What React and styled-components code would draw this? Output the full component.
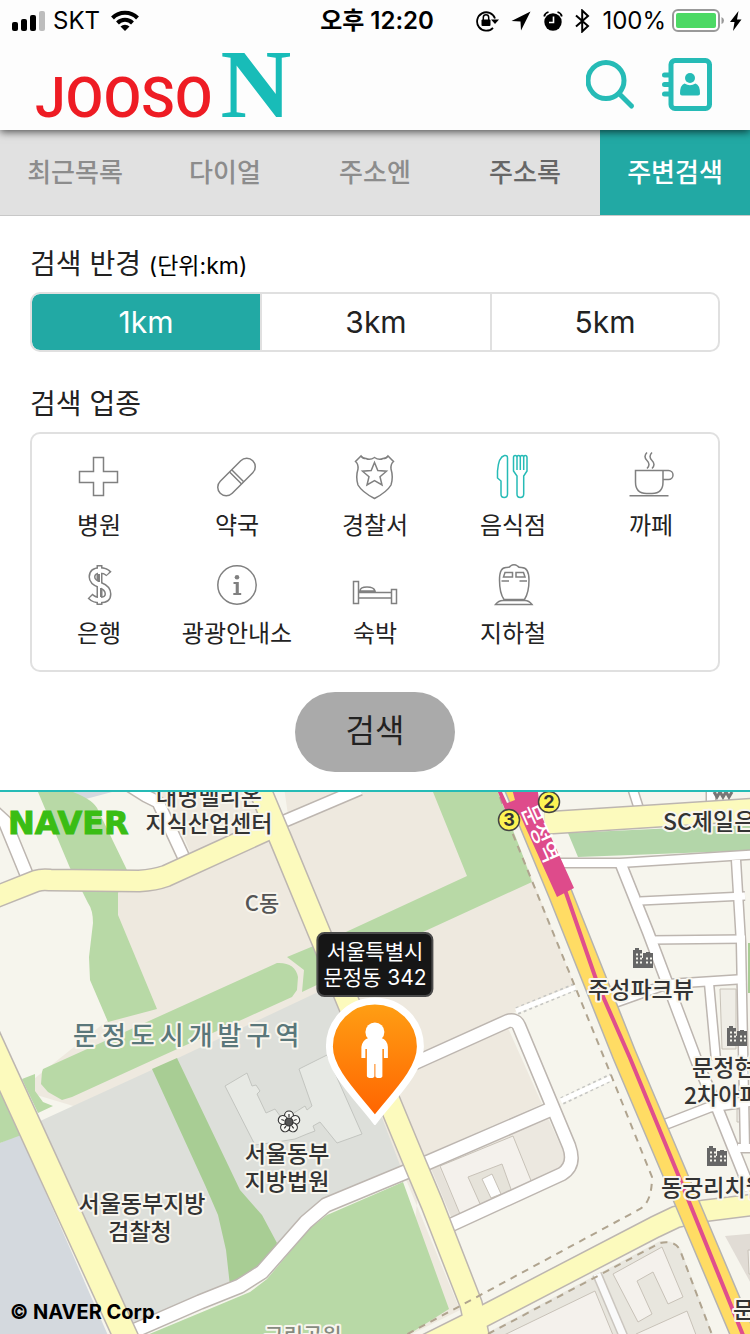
import React, { useState } from "react";
import styled, { createGlobalStyle, css } from "styled-components";

const teal = "#22a9a4";
const tealBright = "#26bbb6";
const line = "#e0e0e0";
const ui = `Inter, "Noto Sans CJK KR", sans-serif`;

const GlobalStyle = createGlobalStyle`
  *, *::before, *::after { box-sizing: border-box; }
  body { margin: 0; background: #fff; color: #222; font-family: ${ui}; }
  button { font: inherit; border: 0; padding: 0; background: none; cursor: pointer; }
  h2, fieldset, ul { margin: 0; padding: 0; border: 0; min-width: 0; }
`;

const Screen = styled.div`
  display: flex;
  flex-direction: column;
  min-height: 100vh;
`;

/* ---------- top ---------- */

const Top = styled.header`
  position: relative;
  z-index: 2;
  background: #fdfdfd;
  box-shadow: 0 2px 8px rgba(0, 0, 0, 0.65);
`;

const StatusBar = styled.div`
  display: grid;
  grid-template-columns: 1fr auto 1fr;
  align-items: center;
  height: 40px;
  padding: 2px 8px 0 12px;
  color: #000;
  font-size: 24px;
  line-height: 32px;
`;

const StatusGroup = styled.div`
  display: flex;
  align-items: center;
  justify-content: ${(p) => (p.$end ? "flex-end" : "flex-start")};
  gap: ${(p) => p.$gap}px;
`;

const Clock = styled.time`
  font-weight: 600;
`;

const Brand = styled.div`
  display: flex;
  align-items: center;
  justify-content: space-between;
  height: 90px;
  padding: 0 38px 0 35px;
`;

const Logo = styled.a`
  display: flex;
  align-items: baseline;
  gap: 8px;
  padding-top: 12px;
  text-decoration: none;
`;

const LogoWord = styled.span`
  color: #ee1c24;
  font: 500 55px/90px Roboto, sans-serif;
`;

const LogoLetter = styled.span`
  color: #18bcb8;
  font: 700 98px/90px "Liberation Serif", serif;
`;

const Actions = styled.div`
  display: flex;
  align-items: center;
  gap: 26px;
`;

const IconButton = styled.button`
  display: flex;
  color: ${tealBright};
`;

/* ---------- tabs ---------- */

const Tabs = styled.nav`
  display: grid;
  grid-template-columns: repeat(5, 1fr);
  height: 86px;
  background: #e1e1e1;
  border-bottom: 1px solid #c8c8c8;
`;

const Tab = styled.a`
  display: flex;
  align-items: center;
  justify-content: center;
  color: ${(p) => (p.$dark ? "#666" : "#8c8c8c")};
  font-size: 26px;
  font-weight: 500;
  line-height: 40px;
  text-decoration: none;
  white-space: nowrap;
  &[aria-current] { background: ${teal}; color: #fff; }
`;

/* ---------- search form ---------- */

const SearchForm = styled.form`
  display: flex;
  flex-direction: column;
  padding: 28px 30px 18px;
  border-bottom: 2px solid ${tealBright};
`;

const Heading = styled.h2`
  color: #222;
  font-size: 28px;
  font-weight: 400;
  line-height: 40px;
  margin: ${(p) => (p.$spaced ? 32 : 0)}px 0 8px;
`;

const Unit = styled.small`
  color: #000;
  font-size: 23px;
  line-height: 32px;
`;

const Segments = styled.fieldset`
  display: grid;
  grid-template-columns: repeat(3, 1fr);
`;

const Segment = styled.label`
  position: relative;
  display: flex;
  align-items: center;
  justify-content: center;
  height: 60px;
  border: 2px solid ${line};
  border-right-width: 0;
  font-size: 30px;
  line-height: 40px;
  cursor: pointer;
  &:first-of-type { border-radius: 10px 0 0 10px; }
  &:last-of-type { border-right-width: 2px; border-radius: 0 10px 10px 0; }
  ${(p) => p.$on && css`background: ${teal} padding-box; color: #fff;`}
`;

const SegmentInput = styled.input`
  position: absolute;
  inset: 0;
  width: 100%;
  height: 100%;
  margin: 0;
  opacity: 0;
`;

const Categories = styled.div`
  display: grid;
  grid-template-columns: repeat(5, 1fr);
  row-gap: 16px;
  padding: 20px 0;
  border-radius: 10px;
  box-shadow: inset 0 0 0 2px ${line};
`;

const Category = styled.button`
  display: flex;
  flex-direction: column;
  align-items: center;
  gap: 8px;
  color: #222;
  font-size: 24px;
  line-height: 36px;
  white-space: nowrap;
  svg { color: ${(p) => (p.$on ? tealBright : "#808080")}; }
`;

const Submit = styled.button`
  && {
    align-self: center;
    width: 160px;
    height: 80px;
    margin-top: 20px;
    padding-bottom: 2px;
    border-radius: 40px;
    background: #aaa;
    color: #222;
    font-size: 32px;
    line-height: 78px;
  }
`;

/* ---------- map ---------- */

const MapArea = styled.main`
  position: relative;
  flex: 1;
  min-height: 542px;
  overflow: hidden;
  background: #f6f5ed;
`;

const MapCanvas = styled.svg`
  position: absolute;
  inset: 0;
  display: block;
  width: 100%;
  height: 100%;
`;

const MapLogo = styled.a`
  position: absolute;
  left: 8px;
  top: 14px;
  color: #3abd14;
  font: 700 32px/34px "DejaVu Sans", sans-serif;
  -webkit-text-stroke: 1px #3abd14;
  text-decoration: none;
`;

const Copyright = styled.div`
  position: absolute;
  left: 10px;
  bottom: 8px;
  color: #000;
  font-size: 20px;
  font-weight: 700;
  line-height: 28px;
`;

const Marker = styled.div`
  position: absolute;
  left: 50%;
  top: 140px;
  display: flex;
  flex-direction: column;
  align-items: center;
  transform: translateX(-50%);
`;

const Callout = styled.div`
  padding: 5px;
  border: 2px solid #4b4b4b;
  border-radius: 8px;
  background: #161616;
  color: #fff;
  font-size: 21px;
  line-height: 26px;
  text-align: center;
  white-space: nowrap;
  height: 65px;
`;

/* ---------- status and header icons ---------- */

const Signal = () => (
  <svg width="33" height="20" aria-hidden="true">
    <rect x="0" y="11" width="6" height="9" rx="2" />
    <rect x="9" y="8" width="6" height="12" rx="2" />
    <rect x="18" y="4" width="6" height="16" rx="2" />
    <rect x="27" y="0" width="6" height="20" rx="2" fill="#bdbdbd" />
  </svg>
);

const Wifi = () => (
  <svg width="32" height="22" viewBox="-3 0 32 22" fill="none" stroke="#000" strokeWidth="4" aria-hidden="true">
    <path d="M1.500 8a17.500 17.500 0 0 1 25 0" />
    <path d="M6.500 13a10.500 10.500 0 0 1 15 0" />
    <path d="M14 21l-4.500-4.500a6.500 6.500 0 0 1 9 0z" fill="#000" stroke="none" />
  </svg>
);

const RotationLock = () => (
  <svg width="23" height="22" viewBox="0 0 23 22" aria-hidden="true">
    <path d="M17 17.800A9.200 9.200 0 1 1 19 8.500" fill="none" stroke="#000" strokeWidth="1.800" />
    <path d="M15 9.500h8l-4 4.500z" />
    <rect x="5.500" y="9.500" width="9" height="6.500" rx="1" />
    <path d="M7.300 10V7.500a2.700 2.700 0 0 1 5.400 0V10" fill="none" stroke="#000" strokeWidth="1.500" />
  </svg>
);

const Location = () => (
  <svg width="20" height="20" viewBox="0 0 20 20" aria-hidden="true">
    <path d="M19.500 0.500L10 19.500L9.500 10.500L0.500 10z" />
  </svg>
);

const Alarm = () => (
  <svg width="20" height="20" viewBox="0 0 20 20" aria-hidden="true">
    <circle cx="10" cy="11" r="8.700" />
    <path d="M10.500 5.500v6H6" fill="none" stroke="#fff" strokeWidth="1.600" />
    <path d="M1.200 5.500Q1.800 2 5.500 1M18.800 5.500Q18.200 2 14.500 1" fill="none" stroke="#000" strokeWidth="1.800" />
  </svg>
);

const Bluetooth = () => (
  <svg width="15" height="24" viewBox="0 0 15 24" fill="none" stroke="#000" strokeWidth="2" aria-hidden="true">
    <path d="M1 6.500l12 10.500-5.800 5.500V1.500L13 7 1 17.500" />
  </svg>
);

const Battery = () => (
  <svg width="52" height="24" viewBox="0 0 52 24" aria-hidden="true">
    <rect x="1" y="1" width="46" height="21" rx="5" fill="#fff" stroke="#999" strokeWidth="2" />
    <rect x="4" y="4" width="40" height="15" rx="2" fill="#4cd964" />
    <path d="M49.500 8q2.500 1 2.500 3.500t-2.500 3.500z" fill="#999" />
  </svg>
);

const Bolt = () => (
  <svg width="12" height="20" viewBox="0 0 12 20" aria-hidden="true">
    <path d="M8.500 0L0 11h4.500L3 20l8.500-11.500H7z" />
  </svg>
);

const SearchGlyph = () => (
  <svg width="50" height="54" viewBox="0 0 50 54" fill="none" stroke="currentColor" strokeWidth="5" aria-hidden="true">
    <circle cx="20" cy="22.500" r="18" />
    <path d="M33.500 36l12 12" strokeLinecap="round" />
  </svg>
);

const BookGlyph = () => (
  <svg width="50" height="54" viewBox="0 0 50 54" fill="none" stroke="currentColor" strokeWidth="5" aria-hidden="true">
    <rect x="9" y="2.500" width="38.500" height="48" rx="4" />
    <path d="M2.500 17h5M2.500 26.500h5M2.500 36h5" strokeLinecap="round" />
    <circle cx="28" cy="20" r="5" fill="currentColor" stroke="none" />
    <path d="M22.500 25.500q5.500 3.500 11 0q4.500 1.500 4.500 10q0 2-2 2H20q-2 0-2-2q0-8.500 4.500-10z" fill="currentColor" stroke="none" />
  </svg>
);

/* ---------- category icons, drawn on a 48 unit square ---------- */

const glyphs = {
  cross: <path d="M18.500 5.500h10v14h14v11h-14v13h-10v-13h-14v-11h14z" />,
  pill: (
    <g transform="translate(23.500 25) rotate(-45)">
      <rect x="-23" y="-8.500" width="46" height="17" rx="8.500" />
      <path d="M-1.300-8.500v17M1.700-8.500v17" />
    </g>
  ),
  shield: (
    <>
      <path d="M23.500 5.500Q28 8.500 32 6.500Q35.500 6.500 37 4L42.500 9.500Q39.500 12 40 17Q42.500 25 40 33Q36 40 23.500 46.500Q11 40 7 33Q4.500 25 7 17Q7.500 12 4.500 9.500L10 4Q11.500 6.500 15 6.500Q19 8.500 23.500 5.500z" />
      <path d="M23.500 10.500L26.800 18.500L35.500 19.200L29 24.800L31 33L23.500 28.700L16 33L18 24.800L11.500 19.200L20.200 18.500z" />
    </>
  ),
  cutlery: (
    <>
      <path d="M15.500 3.500Q18.500 3 18.500 6V42Q18.500 45.500 15.200 45.500T12 42V29L8.500 26V19Q9.500 5 15.500 3.500z" />
      <path d="M24.500 5.500Q24.500 3.500 26.200 3.500T28 5.500Q28 3.500 29.600 3.500T31.300 5.500Q31.300 3.500 33 3.500T34.700 5.500Q34.700 3.500 36.300 3.500T38 5.500V19L34.700 24V42Q34.700 45.500 31.300 45.500T28 42V24L24.500 19zM28 5v13M31.300 5v13M34.700 5v13" />
    </>
  ),
  cup: (
    <>
      <path d="M8.500 18.500H36V30Q36 41.500 25 41.500H19.500Q8.500 41.500 8.500 30zM36 18.500h5.500a4.300 4.300 0 0 1 0 9H36M2.500 43.800h39" />
      <path d="M20 0.500q-4 4 0 8t0 8M25 0.500q-4 4 0 8t0 8" />
    </>
  ),
  dollar: (
    <>
      <path d="M24.500 5v40" strokeWidth="6" />
      <path d="M34 14Q31 10.500 25 10.500Q17 10.500 17 17Q17 22 25 25Q33 28 33 34Q33 40 25 40Q19 40 15 36" strokeWidth="7" />
      <path d="M24.500 6.500v37" stroke="#fff" strokeWidth="3" />
      <path d="M33 13.200Q30 10.500 25 10.500Q17 10.500 17 17Q17 22 25 25Q33 28 33 34Q33 40 25 40Q19 40 16 36.800" stroke="#fff" strokeWidth="4" />
      <path d="M24 14v8M26 28v9" strokeWidth="2" />
    </>
  ),
  info: (
    <>
      <circle cx="24" cy="25" r="19.200" />
      <circle cx="24" cy="17.300" r="2.300" fill="currentColor" stroke="none" />
      <path d="M20.500 22h5.300v11h2.400v2h-7.900v-2h2.400v-9h-2.200z" fill="currentColor" stroke="none" />
    </>
  ),
  bed: (
    <>
      <path d="M2.500 21.500h5v22h-5zM40.500 29.500h5v14h-5zM7.500 32.500h33M7.500 38h33M9 31q0-4 7-4t8 4z" />
    </>
  ),
  train: (
    <>
      <path d="M18 39.500h-3Q10.500 33 10.500 20T17.500 7.500q3 0 4-1.500q3.500-2.500 7 0q1 1.500 4 1.500Q40 7.500 40 20T35.500 39.500z" />
      <path d="M16 12.500h7.500v4.500h-9zM27 12.500h7.500l1.500 4.500h-9zM12.500 21h7.500M30.500 21H38M14 40.500h22q4 0 7 4H6.500q3-4 7.500-4z" />
    </>
  ),
};

const Glyph = ({ name }) => (
  <svg width="48" height="48" viewBox="0 0 48 48" fill="none" stroke="currentColor" strokeWidth="1.500" aria-hidden="true">
    {glyphs[name]}
  </svg>
);

const Pin = () => (
  <svg width="100" height="128" viewBox="325 997 100 128" aria-hidden="true">
    <defs>
      <linearGradient id="pinFill" x1="0" y1="0" x2="0" y2="1">
        <stop offset="0" stopColor="#ffa014" />
        <stop offset="1" stopColor="#ff6200" />
      </linearGradient>
    </defs>
    <path
      d="M374.500 1001a45.500 45.500 0 0 1 45.500 45.500C420 1071 393 1096 374.500 1120C356 1096 329 1071 329 1046.500A45.500 45.500 0 0 1 374.500 1001z"
      fill="url(#pinFill)" stroke="#fff" strokeWidth="7"
    />
    <g fill="#fff">
      <circle cx="374.500" cy="1032" r="9.500" />
      <path d="M368 1038h13q6 2 6.500 9v11h-4v-9l-1.500 0v27q0 2-3.500 2t-3.500-2v-12h-1v12q0 2-3.500 2t-4-2v-27l-1.500 0v9h-4v-11q1-7 7-9z" />
    </g>
  </svg>
);

/* ---------- map drawing ---------- */

const Road = ({ d, w, color = "#fff", edge = "#bdb6b0" }) => (
  <>
    <path d={d} fill="none" stroke={edge} strokeWidth={w + 3} strokeLinejoin="round" />
    <path d={d} fill="none" stroke={color} strokeWidth={w} strokeLinejoin="round" />
  </>
);

const Network = ({ roads }) => (
  <g fill="none" strokeLinejoin="round">
    {roads.map(([d, w]) => (
      <path key={d} d={d} stroke="#bdb6b0" strokeWidth={w + 3} />
    ))}
    {roads.map(([d, w, color]) => (
      <path key={d} d={d} stroke={color || "#fff"} strokeWidth={w} />
    ))}
  </g>
);

const whiteRoads = [
  ["M-6 812L5 822L28 878", 12],
  ["M130 786L146 796L158 802L184 858", 11],
  ["M280 823L360 789", 11],
  ["M122 1336L200 1302L240 1286L262 1272L306 1222L326 1205L408 1171L549 1110", 13],
  ["M395 1072L508 1021Q516 1019 519 1026L569 1146Q576 1165 562 1174L440 1230", 12],
  ["M555 863H620L760 854", 8],
  ["M631 784L640 812", 8],
  ["M711 784V810", 8],
  ["M620 862L648 932L697 1062L716 1105L750 1190", 10],
  ["M640 901L745 896", 7],
  ["M650 940L745 939", 7],
  ["M606 1006L668 984L745 979", 8],
  ["M736 860L741 943L745 1150", 8],
  ["M709 983L716 1060", 8],
  ["M656 1128L710 1107L760 1100", 9],
  ["M738 1148H760", 8],
];

const yellowRoads = [
  ["M-33 990L135 1357", 23, "#fcfabd"],
  ["M-12 900L36 881Q42 879 50 880L139 881Q155 880 166 876L280 824", 20, "#fcfabd"],
  ["M255 778L281 840L319 932L411 1154L432 1204L471 1304L480 1345", 21, "#fcfabd"],
  ["M545 823L655 816L760 809", 21, "#fcfabd"],
  ["M760 1204L703 1211L676 1217L655 1227L480 1318L420 1348", 20, "#fcfabd"],
];

const labels = [
  { x: 209, y: 805, t: "대명밸리온" },
  { x: 209, y: 832, t: "지식산업센터" },
  { x: 262, y: 911, t: "C동", size: 22, color: "#555" },
  { x: 641, y: 998, t: "주성파크뷰" },
  { x: 287, y: 1162, t: "서울동부" },
  { x: 287, y: 1190, t: "지방법원" },
  { x: 142, y: 1212, t: "서울동부지방" },
  { x: 140, y: 1240, t: "검찰청" },
  { x: 663, y: 830, t: "SC제일은행", anchor: "start" },
  { x: 692, y: 1076, t: "문정현대", anchor: "start" },
  { x: 684, y: 1104, t: "2차아파트", anchor: "start" },
  { x: 661, y: 1196, t: "동궁리치웰", anchor: "start" },
  { x: 733, y: 1318, t: "문정", anchor: "start" },
  { x: 303, y: 1343, t: "근린공원", size: 21, color: "#868b80" },
];

const MapLabel = styled.text`
  font-family: "Noto Sans CJK KR", sans-serif;
  font-weight: 500;
  font-size: ${(p) => p.$size || 23}px;
  fill: ${(p) => p.$color || "#333"};
  stroke: #f8f6ee;
  stroke-width: 4px;
  stroke-linejoin: round;
  paint-order: stroke;
`;

const DistrictLabel = styled(MapLabel)`
  letter-spacing: 5px;
`;

const StationLabel = styled.text`
  font: 500 22px "Noto Sans CJK KR", sans-serif;
  fill: #fff;
`;

const ExitNumber = styled.text`
  font: 700 18px Inter, sans-serif;
  fill: #333;
`;

const Apartment = ({ x, y }) => (
  <g transform={`translate(${x} ${y})`}>
    <path d="M0 2h2V0h4v2h3v18H0zM10 5h3V4h4v1h3v15H10z" fill="#666" />
    <path d="M0 20V10h20v10z" fill="#666" />
    <path d="M3 6.500h6M3 10.500h6M3 14.500h6M13 10.500h6M13 14.500h6" stroke="#f6f5ed" strokeWidth="2" strokeDasharray="2 2" />
  </g>
);

const petals = [0, 72, 144, 216, 288];

const CityMap = () => (
  <MapCanvas viewBox="0 792 750 542" preserveAspectRatio="xMidYMin slice" role="img" aria-label="지도">
    <path d="M0 780h750v560H0z" fill="#f6f5ed" />

    {/* blocks */}
    <path d="M153 780H262L290 835L190 852L172 808L153 800z" fill="#eee9df" />
    <path d="M70 792H112L82 800z" fill="#d4d9df" />
    <path d="M118 885L165 888L269 841L345 1020L120 1120L20 1090L108 1020z" fill="#eee9df" />
    <path d="M283 780H497L575 985L515 1012L430 1060L398 1099L300 900z" fill="#eee9df" />
    <path d="M0 1143L20 1134L110 1340H0z" fill="#d4d9de" />
    <path d="M0 1093L8 1094L24 1134L0 1143z" fill="#b8d9a6" />
    <path d="M38 1122L178 1058L333 985L352 1030L405 1165L327 1210L262 1280L133 1330z" fill="#dddfda" />
    <path d="M360 1060L400 1165L460 1310L400 1340L420 1180z" fill="#eee9df" />

    {/* parks */}
    <path d="M38 780V792L70 868L83 893L88 903Q93 910 93 923L89 957L90 980L108 1022L157 1009L118 915V893L127 870L98 810Q94 800 73 792V780z" fill="#b8d9a6" />
    <path d="M43 1069L277 963Q295 962 298 977L297 990L292 997L153 1060L72 1097L62 1100L48 1092L41 1084L42 1072z" fill="#b8d9a6" />
    <path d="M22 1079L35 1074V1091L43 1102L53 1106L38 1113z" fill="#b8d9a6" />
    <path d="M287 957L328 940L338 975L302 992L304 970z" fill="#b8d9a6" />
    <path d="M433 780V792L467 876L320 944V965L423 932L532 882L497 780z" fill="#b8d9a6" />
    <path d="M568 833L760 824V850L578 857z" fill="#b3d6a9" />
    <path d="M152 1069L177 1058L240 1190L262 1215L277 1243L262 1272L230 1286L226 1250L218 1215L205 1185z" fill="#a8cd94" />
    <path d="M135 1340L207 1310L250 1292L267 1279L310 1228L327 1215L403 1182L449 1309L400 1340z" fill="#b8d9a6" />

    {/* courthouse */}
    <path
      d="M225 1086L247 1073L252 1086L256 1085L260 1091L257 1094L266 1113L275 1109L283 1120L297 1111L305 1106L307 1110L312 1106L299 1069L327 1055L362 1134L337 1143L320 1122L313 1126L315 1131L307 1134L295 1139L277 1142L255 1145z"
      fill="#e7e9e4" stroke="#c3c5c0"
    />

    {/* blocks east of the pin */}
    <path d="M420 1069L508 1028L542 1104L423 1156L398 1099z" fill="#eee9df" />
    <path d="M430 1167L548 1118L567 1160L557 1169L452 1219z" fill="#ece8e0" />
    <path d="M431 1168L438 1165L460 1215L452 1219z" fill="#e6e2da" />
    <path d="M440 1166L513 1136L532 1183L512 1192L481 1206L460 1214z" fill="#f4f1ec" stroke="#c8c2b8" />
    <path d="M468 1177L502 1164L512 1192L481 1206z" fill="#e6e3da" stroke="#c8c2b8" />
    <path d="M482 1179L492 1174L501 1194L491 1198z" fill="#fdfdfd" stroke="#c8c2b8" />

    {/* south-east buildings */}
    <path d="M485 1334L660 1241Q676 1240 681 1250L715 1340H485z" fill="#e8e6de" />
    <path d="M500 1337L595 1291L615 1340z" fill="#f4f1ec" stroke="#c8c2b8" />
    <path d="M613 1274L662 1247L683 1297L668 1304L653 1272L637 1281L652 1314L638 1322z" fill="#f4f1ec" stroke="#c8c2b8" />
    <path d="M636 1334L687 1311L698 1340H640z" fill="#f4f1ec" stroke="#c8c2b8" />
    <path d="M725 1236L760 1233V1300z" fill="#e1dcd5" />
    <path d="M748 1250h10v24h-9z" fill="#f4f1ec" stroke="#c8c2b8" />
    <Road d="M597 1274L625 1340" w={7} color="#fafafa" edge="#cbc6bf" />
    <path d="M720 989h16v60h-14zM737 1109h20v13h-20z" fill="#efede6" stroke="#c8c2b8" />
    <path d="M748 943h6v50h-6z" fill="#a8cd94" />

    <Network roads={whiteRoads} />
    <Network roads={yellowRoads} />

    {/* footpaths */}
    <path d="M517 1011L575 987M562 1101L612 1077" stroke="#c6c6c2" strokeWidth="8" strokeDasharray="3 3" />
    <path d="M516 1011L576 987M561 1101L613 1077" stroke="#fff" strokeWidth="5" />
    <path d="M495 785L510 785L620 1060H604z" fill="#f6f5ed" />
    <path
      d="M500 797L512 832L605 1060L652 1177Q652 1202 640 1209L460 1306L400 1338M488 1334L660 1243Q675 1240 680 1250L714 1340"
      fill="none" stroke="#b0a48f" strokeWidth="2" strokeDasharray="7 6"
    />

    {/* subway avenue */}
    <Road d="M509 770L560 893L624 1054L696 1224L750 1352" w={22} color="#ffdc64" edge="#b5b3b0" />
    <path d="M565 890L598 985L630 1058L677 1172L745 1340" fill="none" stroke="#e04e8d" strokeWidth="4" />
    <path d="M495 785L502 785V792L507 803L515 800L511 785H537L541 815L574 888L557 897L520 815L506 812z" fill="#de4b8b" />
    <StationLabel transform="translate(521 809) rotate(66)">문정역</StationLabel>

    <g fill="#fdf353" stroke="#444" strokeWidth="1.500">
      <circle cx="549" cy="802" r="10.500" />
      <circle cx="509" cy="820" r="10.500" />
    </g>
    <ExitNumber x="549" y="808" textAnchor="middle">2</ExitNumber>
    <ExitNumber x="509" y="826" textAnchor="middle">3</ExitNumber>

    <path d="M714 792l3 5 3-5 3 5 3-5 3 5 3-5" fill="none" stroke="#777" strokeWidth="3" />
    <Apartment x={633} y={948} />
    <Apartment x={727} y={1026} />
    <Apartment x={707} y={1146} />

    <g transform="translate(289 1122)" stroke="#333" strokeWidth="1.200">
      {petals.map((a) => (
        <g key={a} transform={`rotate(${a})`}>
          <circle cy="-6.500" r="4.500" fill="#f8f8f4" />
          <path d="M0-8v3" />
        </g>
      ))}
      <circle r="4" fill="#555" />
    </g>

    {labels.map((l) => (
      <MapLabel key={l.t} x={l.x} y={l.y} textAnchor={l.anchor || "middle"} $size={l.size} $color={l.color}>
        {l.t}
      </MapLabel>
    ))}
    <DistrictLabel x="73" y="1045" $size={26} $color="#5a777a">문정도시개발구역</DistrictLabel>
  </MapCanvas>
);

const tabs = ["최근목록", "다이얼", "주소엔", "주소록", "주변검색"];

const categories = [
  ["병원", "cross"],
  ["약국", "pill"],
  ["경찰서", "shield"],
  ["음식점", "cutlery"],
  ["까페", "cup"],
  ["은행", "dollar"],
  ["광광안내소", "info"],
  ["숙박", "bed"],
  ["지하철", "train"],
];

export default function App() {
  const [radius, setRadius] = useState("1km");
  const [category, setCategory] = useState("음식점");

  return (
    <Screen>
      <GlobalStyle />
      <Top>
        <StatusBar>
          <StatusGroup $gap={8}>
            <Signal />
            <span>SKT</span>
            <Wifi />
          </StatusGroup>
          <Clock>오후 12:20</Clock>
          <StatusGroup $end $gap={6}>
            <StatusGroup $gap={12}>
              <RotationLock />
              <Location />
              <Alarm />
              <Bluetooth />
              <span>100%</span>
            </StatusGroup>
            <Battery />
            <Bolt />
          </StatusGroup>
        </StatusBar>
        <Brand>
          <Logo href="#home">
            <LogoWord>JOOSO</LogoWord>
            <LogoLetter>N</LogoLetter>
          </Logo>
          <Actions>
            <IconButton type="button" aria-label="검색 열기"><SearchGlyph /></IconButton>
            <IconButton type="button" aria-label="주소록 열기"><BookGlyph /></IconButton>
          </Actions>
        </Brand>
      </Top>

      <Tabs>
        {tabs.map((t, i) => (
          <Tab key={t} href={`#tab${i}`} $dark={i === 3} aria-current={i === 4 ? "page" : undefined}>{t}</Tab>
        ))}
      </Tabs>

      <SearchForm onSubmit={(e) => e.preventDefault()}>
        <Heading id="radius">검색 반경 <Unit>(단위:km)</Unit></Heading>
        <Segments aria-labelledby="radius">
          {["1km", "3km", "5km"].map((r) => (
            <Segment key={r} $on={r === radius}>
              <SegmentInput type="radio" name="radius" value={r} checked={r === radius} onChange={() => setRadius(r)} />
              {r}
            </Segment>
          ))}
        </Segments>

        <Heading id="category" $spaced>검색 업종</Heading>
        <Categories role="group" aria-labelledby="category">
          {categories.map(([name, icon]) => (
            <Category key={name} type="button" $on={name === category} aria-pressed={name === category} onClick={() => setCategory(name)}>
              <Glyph name={icon} />
              {name}
            </Category>
          ))}
        </Categories>

        <Submit type="submit">검색</Submit>
      </SearchForm>

      <MapArea>
        <CityMap />
        <MapLogo href="#naver">NAVER</MapLogo>
        <Marker>
          <Callout>서울특별시<br />문정동 342</Callout>
          <Pin />
        </Marker>
        <Copyright>© NAVER Corp.</Copyright>
      </MapArea>
    </Screen>
  );
}
